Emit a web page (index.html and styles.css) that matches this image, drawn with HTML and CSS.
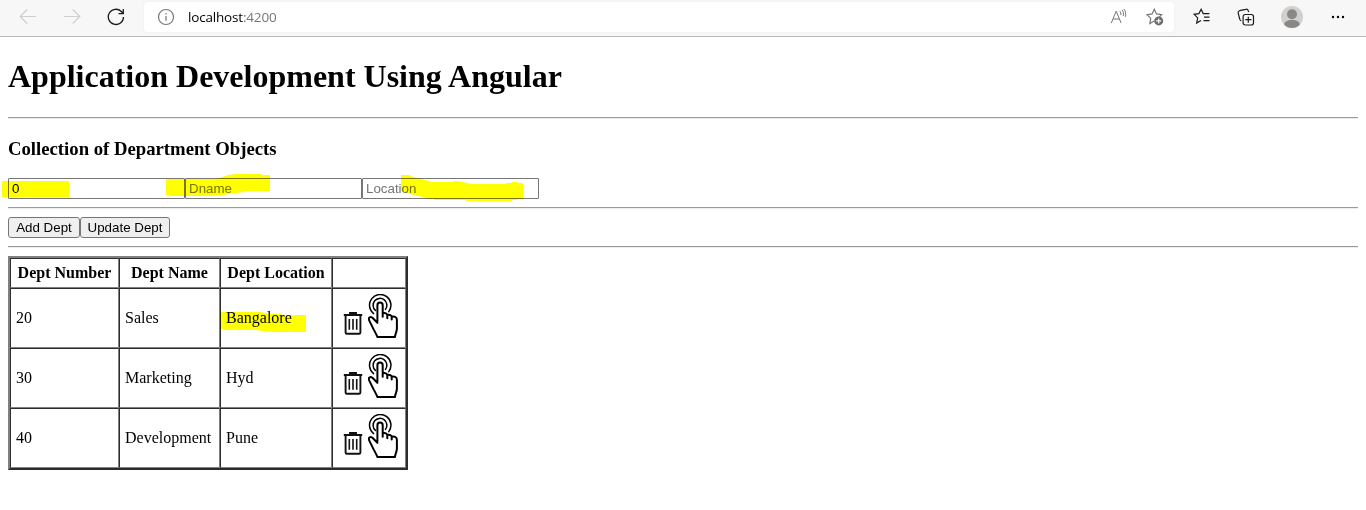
FILE: index.html
```html
<!DOCTYPE html>
<html lang="en">
<head>
<meta charset="utf-8">
<title>Application Development Using Angular</title>
<link rel="stylesheet" href="styles.css">
</head>
<body>
<svg class="defs" width="0" height="0">
  <symbol id="trash" viewBox="0 0 20 24">
    <g fill="none" stroke="#111" stroke-width="1.9">
      <path d="M.8 4h18.4M7 3.7V2h6v1.7M2.6 4v17.4c0 .8.5 1.3 1.3 1.3h12.2c.8 0 1.3-.5 1.3-1.3V4"/>
      <path d="M6.3 8v10.7M10 8v10.7M13.7 8v10.7" stroke-width="1.6"/>
    </g>
  </symbol>
  <symbol id="tap" viewBox="0 0 30 44">
    <g fill="none" stroke="#000" stroke-linecap="round" stroke-linejoin="round">
      <path d="M5.6 19.6A10.7 10.7 0 1 1 20.8 17.6" stroke-width="1.5"/>
      <path d="M7.4 16.4A6.9 6.9 0 1 1 17.5 15.4" stroke-width="1.5"/>
      <path d="M9.4 27.5V11.3c0-3.7 5.3-3.7 5.3 0v11.5M14.7 19.3c2.6-.8 4.6.2 4.6 2.3v2.6M19.3 20.8c2.4-.5 4.4.4 4.4 2.3v2.4M23.7 22.6c3-.6 5.2.6 5.2 3.2v8.7c0 3.4-1.5 4.6-2 8.5H9.4c-.9-2.6-2.3-4.7-3.8-7.6L1.3 26.6c-1.6-3.4 1.5-4.7 3.7-2.3l4.4 4.6" stroke-width="2"/>
    </g>
  </symbol>
</svg>

<header class="toolbar">
  <svg class="nav-icon back" viewBox="0 0 18 18"><path d="M17 8.5H1.2M8.2 1.5l-7 7 7 7"/></svg>
  <svg class="nav-icon forward" viewBox="0 0 18 18"><path d="M1 8.5h15.8M9.8 1.5l7 7-7 7"/></svg>
  <svg class="nav-icon reload" viewBox="0 0 18 18"><path d="M16.5 8.9a7.6 7.6 0 1 1-2.2-5.4l1.7 1.7M16.3 1v4.6h-4.8"/></svg>
  <div class="address">
    <svg class="info" viewBox="0 0 18 18"><circle cx="9" cy="9" r="7.5"/><path d="M9 8v4.7M9 5v1.4"/></svg>
    <span class="url">localhost<span class="port">:4200</span></span>
    <svg class="read" viewBox="0 0 18 18"><path d="M1.3 15L6.2 3.2 11.1 15M3 11h6.4M9.8 3.2c1 1 1.3 2.4 1 3.9M11.9 1.9c1.6 1.8 2 4 1.2 6.2M13.8 1c1.8 2 2.4 5 1.5 7.8"/></svg>
    <svg class="favorite" viewBox="0 0 18 18"><path d="M8.2 13L3.8 15.5l.9-5.1L1 6.7l5-.8 2.3-4.6 2.2 4.6 5.1.8-2.2 2.2"/><circle cx="12.7" cy="12.9" r="4.5" class="dot"/><path class="plus" d="M12.7 10.4v5M10.2 12.9h5"/></svg>
  </div>
  <svg class="tool" viewBox="0 0 18 18"><path d="M8 12.4L3.7 15l1-5.1L1.1 6.3l4.8-.7L8.1 1.3l2.1 4.3h6.2M11 9.2h5.5M10.5 12.7h6"/></svg>
  <svg class="tool" viewBox="0 0 18 18"><path d="M4.2 12.9c-1-.3-1.3-.9-1.5-1.9L1.2 5.1c-.3-1.2.1-2 1.3-2.4l6.2-1.4c1.2-.3 2.2.2 2.5 1.4l.6 1.4M8.3 6.5h6c1.5 0 2.2.8 2.2 2.2v6.1c0 1.4-.7 2.2-2.2 2.2h-6c-1.5 0-2.2-.8-2.2-2.2V8.7c0-1.4.7-2.2 2.2-2.2zM11.3 8.7v6.1M8.3 11.7h6.1"/></svg>
  <svg class="avatar" viewBox="0 0 22 22"><circle cx="11" cy="11" r="11" fill="#d2d0ce"/><circle cx="11" cy="8.2" r="5" fill="#8a8886"/><path d="M3.2 18.7c0-2.8 3-4.6 7.8-4.6s7.8 1.8 7.8 4.6A11 11 0 0 1 11 22a11 11 0 0 1-7.8-3.3z" fill="#8a8886"/></svg>
  <svg class="more" viewBox="0 0 14 4"><circle cx="2" cy="2" r="1.2"/><circle cx="7" cy="2" r="1.2"/><circle cx="12" cy="2" r="1.2"/></svg>
</header>

<main class="page">
  <h1>Application Development Using Angular</h1>
  <hr>
  <h3>Collection of Department Objects</h3>
  <div class="fields"><input type="text" value="0"><input type="text" placeholder="Dname"><input type="text" placeholder="Location"></div>
  <hr>
  <div class="actions"><button class="add">Add Dept</button><button class="update">Update Dept</button></div>
  <hr>
  <table class="depts">
    <colgroup><col class="c-number"><col class="c-name"><col class="c-location"><col class="c-actions"></colgroup>
    <tr class="head"><th>Dept Number</th><th>Dept Name</th><th>Dept Location</th><th></th></tr>
    <tr><td>20</td><td>Sales</td><td>Bangalore</td><td><div class="icons"><svg class="trash"><use href="#trash"/></svg><svg class="tap"><use href="#tap"/></svg></div></td></tr>
    <tr><td>30</td><td>Marketing</td><td>Hyd</td><td><div class="icons"><svg class="trash"><use href="#trash"/></svg><svg class="tap"><use href="#tap"/></svg></div></td></tr>
    <tr><td>40</td><td>Development</td><td>Pune</td><td><div class="icons"><svg class="trash"><use href="#trash"/></svg><svg class="tap"><use href="#tap"/></svg></div></td></tr>
  </table>
</main>

<!-- Marker strokes over the page -->
<svg class="marker" viewBox="0 0 1366 510" width="1366" height="510">
  <path d="M2 181H69V197H2z"/>
  <path d="M166 179H215L222 177 228 175 236 174H262V175H270V191H250L237 193 222 195 208 196H170V195H166z"/>
  <path d="M401 175H409L413 177 422 179 432 182H453V181H458L472 184H506V183H512V182H518V183H523V199H517V200H512V201H466V200H434V199H429L422 197 414 195 407 193 401 191z"/>
  <path d="M220 312H260L270 314H282V315H306V332H272L255 330H224V329H220z"/>
</svg>
</body>
</html>
```

FILE: styles.css
```css
body {
  margin: 0;
  background: #fff;
  color: #000;
  font-family: "Liberation Serif", "Times New Roman", serif;
  font-size: 16px;
  height: 510px;
  overflow: hidden;
}

.defs { display: block; }

.toolbar {
  display: flex;
  align-items: center;
  box-sizing: border-box;
  height: 37px;
  padding: 0 21px 3px 19px;
  background: #f7f7f7;
  border-bottom: 1px solid #b9b9b9;
}

.toolbar svg {
  flex: none;
  width: 18px;
  height: 18px;
  fill: none;
  stroke: #1b1b1b;
  stroke-width: 1.2;
}

.toolbar .nav-icon { margin-right: 26px; }
.toolbar .back, .toolbar .forward { stroke: #cecece; }
.toolbar .reload { margin-right: 19px; stroke-width: 1.3; }

.address {
  display: flex;
  align-items: center;
  box-sizing: border-box;
  width: 1030px;
  height: 30px;
  padding: 0 10px 0 13px;
  margin-right: 19px;
  border-radius: 4px;
  background: #fff;
  box-shadow: 0 0 3px #ececec;
}

.address svg { stroke: #767676; }

.url {
  flex: 1;
  margin-left: 13px;
  font: 13.5px/20px "Open Sans", "Noto Sans", sans-serif;
  letter-spacing: -0.18px;
}

.port { color: #767676; }
.address .read { margin-right: 18px; stroke-width: 1; }
.toolbar .favorite .dot { fill: #6b6b6b; stroke: none; }
.toolbar .favorite .plus { stroke: #fff; }
.toolbar .tool { margin-right: 26px; }
.toolbar .avatar { width: 22px; height: 22px; margin-right: 28px; stroke: none; }
.toolbar .more { width: 14px; height: 4px; fill: #000; stroke: none; }

.page { padding: 0 8px; }

h1 {
  margin: 21px 0 22px;
  font-size: 32px;
  line-height: 37px;
}

hr {
  box-sizing: border-box;
  height: 2px;
  margin: 8px 0;
  border: 0;
  border-top: 1px solid #9a9a9a;
  border-bottom: 1px solid #eee;
}

h3 {
  margin: 19px 0 18px;
  font-size: 18.72px;
  line-height: 22px;
}

.fields, .actions {
  display: flex;
  height: 21px;
}

input, button {
  box-sizing: border-box;
  height: 21px;
  margin: 0;
  border: 1px solid #767676;
  border-radius: 2px;
  font: 13.333px "Liberation Sans", Arial, sans-serif;
}

input {
  width: 177px;
  padding: 0 3px;
  border-radius: 1px;
  background: #fff;
  color: #000;
}

input::placeholder { color: #757575; }

button {
  padding: 0;
  border-radius: 3px;
  background: #efefef;
  color: #000;
}

.add { width: 72px; }
.update { width: 90px; }

.depts {
  width: 400px;
  table-layout: fixed;
  border: 2px solid;
  border-color: #808080 #2c2c2c #2c2c2c #808080;
  border-spacing: 0;
}

.c-number { width: 109px; }
.c-name { width: 101px; }
.c-location { width: 112px; }
.c-actions { width: 74px; }

tr { height: 60px; }
.head { height: 30px; }

th, td {
  box-sizing: border-box;
  padding: 0 5px;
  border: 1px solid;
  border-color: #2c2c2c #808080 #808080 #2c2c2c;
  white-space: nowrap;
}

th { padding: 0; text-align: center; }
td { text-align: left; }

.icons {
  display: flex;
  align-items: flex-end;
  height: 44px;
  padding: 0 0 4px 5px;
}

.trash { width: 20px; height: 24px; margin: 0 5px 3px 0; }
.tap { width: 30px; height: 44px; }

.marker {
  position: absolute;
  top: 0;
  left: 0;
  fill: #ff0;
  mix-blend-mode: multiply;
  pointer-events: none;
}
```
